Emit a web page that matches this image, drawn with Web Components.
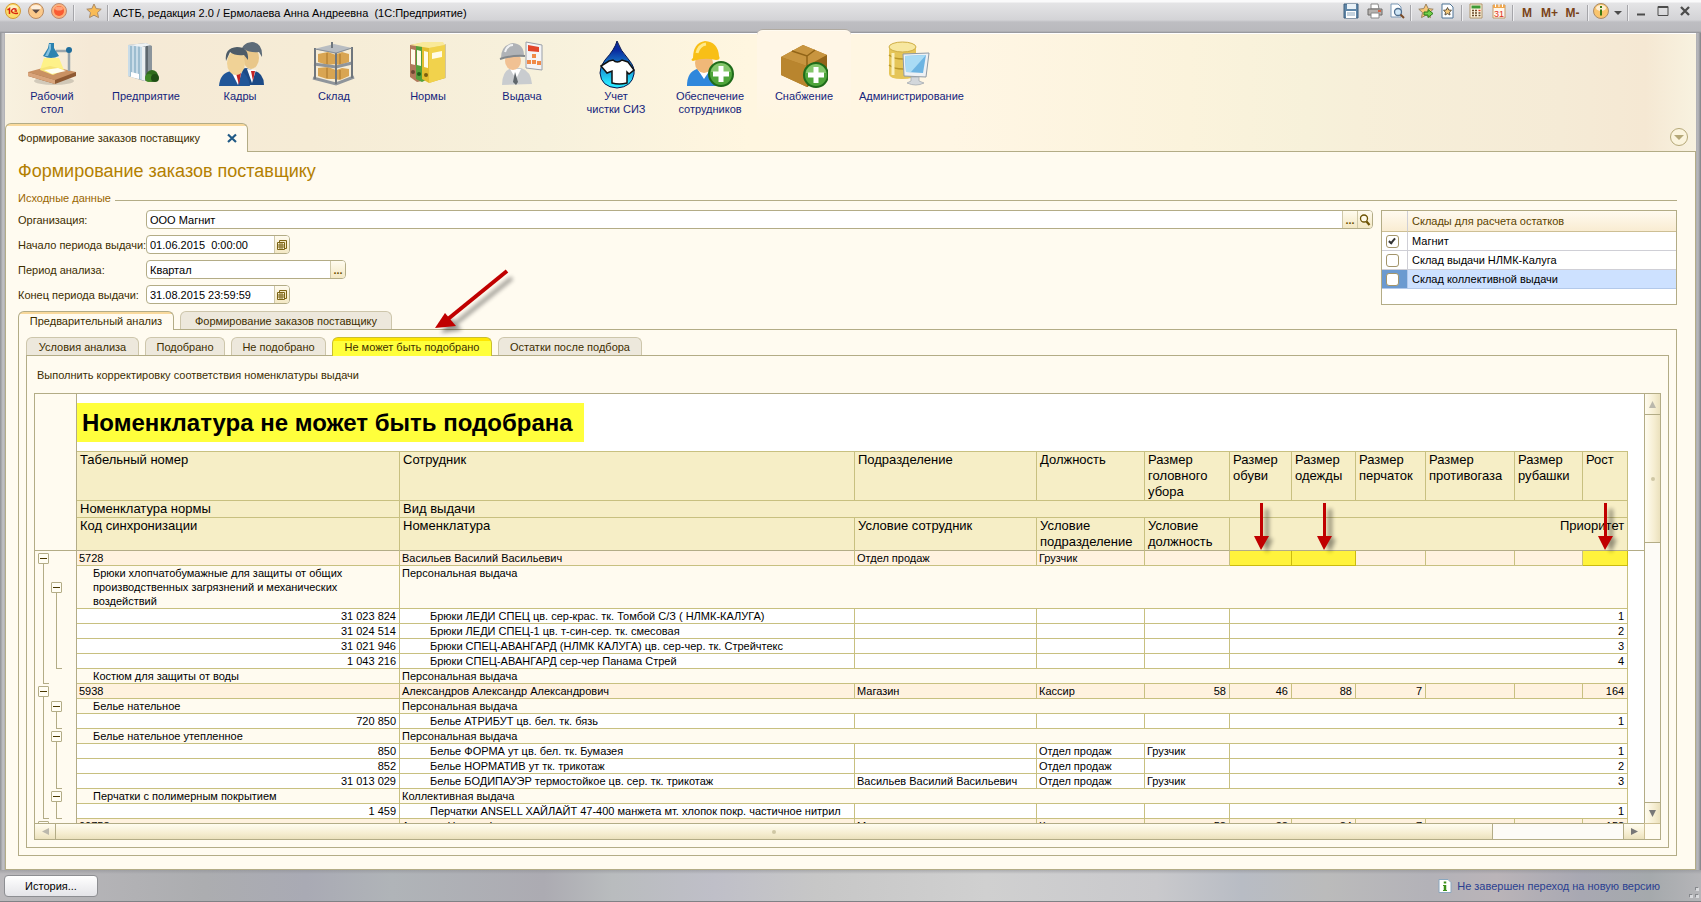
<!DOCTYPE html>
<html lang="ru">
<head>
<meta charset="utf-8">
<title>АСТБ, редакция 2.0</title>
<style>
html, body { margin: 0; height: 100%; }
body { font: 11px/14px "Liberation Sans", Arial, sans-serif; color: #3d2e00; }
</style>
</head>
<body>
<app-window></app-window>
<script>
const BASE = `
  *, *::before, *::after { box-sizing: border-box; }
  button, input { font: inherit; color: inherit; margin: 0; }
  button { background: none; border: 0; padding: 0; cursor: pointer; }
  svg { display: block; }
`;
function define(name, render) {
  customElements.define(name, class extends HTMLElement {
    connectedCallback() {
      if (this.shadowRoot) return;
      const t = document.createElement('template');
      t.innerHTML = render(this);
      this.attachShadow({ mode: 'open' }).append(t.content.cloneNode(true));
    }
  });
}

/* ---------- icons ---------- */
const star = 'M8 1l2.2 4.6 5 .6-3.700 3.400 1 5L8 12.200 3.500 14.600l1-5L.8 6.200l5-.6z';
const plus = (x, y) => `<circle cx="${x}" cy="${y}" r="12" fill="#4fa53a" stroke="#1f6b1a" stroke-width="2"/><path d="M${x - 10} ${y - 2}a10 9 0 0 1 20 0z" fill="#a9dc8c" opacity=".6"/><path d="M${x - 8} ${y}h16M${x} ${y - 8}v16" stroke="#fff" stroke-width="5"/>`;
const ICONS = {
  lamp: [48, `<ellipse cx="26" cy="40" rx="20" ry="4" fill="#000" opacity=".15"/>
    <path d="M0 31v4l27 8 21-8v-4z" fill="#8f5a33"/><path d="M0 31l22-6 26 6-21 8z" fill="#c99163"/><path d="M0 31v4l27 8v-4z" fill="#d9a57c"/>
    <path d="M16 17h15l5 12-11 5-13-5z" fill="#fff27a" opacity=".85"/><path d="M16 29l14-2 8 3-14 3z" fill="#fffef0"/>
    <path d="M28 10h12M41 11v19" stroke="#9aa6ad" stroke-width="2.500" fill="none"/><circle cx="41" cy="9" r="3" fill="#1f6d9c"/>
    <path d="M21 2h5v5l5 8q-8 4-16 0l5-8z" fill="#2c83b0"/><path d="M21 3h2v5l-3 7h-3l4-8z" fill="#83c1df"/>`],
  building: [48, `<path d="M6 4l18-2 6 3v35l-8 0L6 35z" fill="#8b949b"/><path d="M6 4l14 1v34L6 35z" fill="#c9dce8"/><path d="M9 5v30M13 5v31M17 5v33" stroke="#8fb2c8" stroke-width="1.500"/><path d="M6 4l18-2 5 2-9 2z" fill="#eef2f4"/><path d="M20 6l3 0v34l-3-1z" fill="#eceff1"/><path d="M25 5v34" stroke="#5f686e" stroke-width="2"/><path d="M9 31l8 2v5l-8-2z" fill="#fff"/>
    <circle cx="30" cy="35" r="6" fill="#2f6b1c"/><circle cx="27" cy="37" r="4" fill="#3f8626"/><circle cx="33" cy="37" r="4" fill="#1f4f14"/>`],
  people: [48, `<path d="M20 44q0-16 10-17l6 2q12 2 12 15z" fill="#1c4a86"/><path d="M31 28l5 14 4-13z" fill="#fff"/><path d="M35 30l2 10 2-10z" fill="#c62323"/><ellipse cx="35" cy="17" rx="8" ry="11" fill="#e9c78a"/><path d="M25 15Q24 2 36 1q11 1 10 15l-3-5q-9 1-15-3z" fill="#5d6b78"/>
    <path d="M3 45q1-13 12-15h10q7 3 9 15z" fill="#215698"/><path d="M15 30l7 14 4-14z" fill="#fff"/><path d="M20 32l3 12 2-12z" fill="#c62323"/><ellipse cx="20" cy="22" rx="9" ry="12" fill="#f0d296"/><path d="M10 20Q8 7 21 6q12 0 11 13l-4-5q-9 1-14-3z" fill="#4e5c68"/>`],
  rack: [48, `<path d="M4 8l20-5 18 4-16 6z" fill="#b9bdc2"/><path d="M8 13l10-2 8 3v9l-9 1-9-3zM24 14l8-3 7 2v8l-9 3-6-1zM8 27l10-1 8 3v9l-9 0-9-3zM24 30l8-3 7 1v7l-9 4-6-1z" fill="#d9a552"/><path d="M17 12v11M30 13v10M17 27v10M30 29v9" stroke="#a87428" stroke-width="1"/><path d="M4 23l22 3 16-4M3 37l23 6 18-7" fill="none" stroke="#8f959b" stroke-width="3"/><path d="M5 7v31M26 12v31M42 6v31M22 1v6" stroke="#6f767d" stroke-width="2" fill="none"/><path d="M5 8l21 4 16-5" fill="none" stroke="#898f95"/>`],
  binders: [48, `<path d="M34 5l8-2v34l-16 4z" fill="#7d6214" opacity=".3"/><path d="M6 4l12-2v38l-5 1-7-5z" fill="#b0795a"/><path d="M12 4l12-2v36l-6 3-6-3z" fill="#54a03a"/><path d="M18 5l17-3 6 2v33l-16 5-7-4z" fill="#e3bd2e"/><path d="M25 7l16-3v33l-16 5z" fill="#f1d24c"/><path d="M6 4l13-3h20l2 3-16 3z" fill="#f9e99a"/><path d="M7 8l4 1v15l-4-1zM13 9l4 1v15l-4-1zM20 10l4 1v16l-4-1zM28 12l10-2v6l-10 2z" fill="#fffbe8"/><circle cx="9" cy="31" r="2" fill="#6d4631"/><circle cx="15" cy="33" r="2" fill="#225c18"/><circle cx="22" cy="34" r="2" fill="#7a6010"/>`],
  issue: [48, `<path d="M28 1l16 3v25l-16-2z" fill="#f4f4f6" stroke="#9aa0a8"/><path d="M30 4l11 2v5l-11-1z" fill="#e2462a"/><path d="M29 19h4v4h-4zM34 19h4v4h-4zM39 20h4v4h-4zM34 13h4v4h-4z" fill="#f08a48"/><path d="M4 44q0-14 9-17h10q10 3 11 16z" fill="#c9cccf"/><path d="M12 28l6 10 5-10z" fill="#fff"/><path d="M17 31l-2 10 3 3 2-3z" fill="#5f666b"/><ellipse cx="15" cy="20" rx="8" ry="9" fill="#f1c193"/><path d="M3 17Q3 4 15 2q11 1 11 13-12 1-23 2z" fill="#b0b3b7"/><path d="M7 11q2-7 8-7" stroke="#f1f2f3" stroke-width="2" fill="none"/><path d="M2 18q12-4 25-3" stroke="#83888c" stroke-width="2" fill="none"/>`],
  laundry: [48, `<defs><linearGradient id="g" x2="0" y2="1"><stop offset=".2" stop-color="#0a2ca0"/><stop offset=".9" stop-color="#28e6ff"/></linearGradient></defs><path d="M25 0Q28 9 37 19q6 7 5 14-2 13-17 14Q9 46 8 32q0-7 5-13Q23 8 25 0z" fill="url(#g)" stroke="#06164e"/><path d="M17 20l4-1q4 4 9 0l6 2 6 8-5 4-2-2v11q-8 2-15 0V30l-5 2-6-7z" fill="#fff" stroke="#111" stroke-width="1.500"/>`],
  worker: [48, `<path d="M1 45q0-14 10-17h15q8 3 8 17z" fill="#2f87dc"/><path d="M12 29l6 9 6-9z" fill="#fff"/><ellipse cx="18" cy="22" rx="9" ry="10" fill="#f0b878"/><path d="M7 17Q7 2 19 0q13 1 14 15 2 4-3 4-12-3-23 1-3-1 0-3z" fill="#f8bf17"/><path d="M11 12q2-8 9-9" stroke="#ffe98a" stroke-width="3" fill="none"/>${plus(35, 33)}`],
  box: [48, `<path d="M1 16l22-12 24 10v20L27 46 1 34z" fill="#b07c26"/><path d="M1 16l22-12 24 10-20 11z" fill="#c8953f"/><path d="M1 16l26 9v21L1 34z" fill="#b9852e"/><path d="M27 25l20-11v20L27 46z" fill="#93641a"/><path d="M12 10l15 5 8-6M27 15l0 10" fill="none" stroke="#916417" stroke-width="1.500"/>${plus(36, 34)}`],
  admin: [48, `<path d="M2 6v27q0 5 13 5t14-5V6z" fill="#e5c558"/><path d="M2 14q5 4 14 4t13-4M2 24q5 4 14 4t13-4" fill="none" stroke="#b89528" stroke-width="1.500"/><ellipse cx="15.500" cy="6" rx="13.500" ry="5" fill="#f7e7a0" stroke="#cfae46"/><path d="M6 12v22" stroke="#fbf0bd" stroke-width="3"/><path d="M16 13l26-1-3 24-22-1z" fill="#eef1f4" stroke="#8f9aa5"/><path d="M18 15l21-1-3 18-17-1z" fill="#6db4e2"/><path d="M18 15l21-1-15 17-5 0z" fill="#a9dbf5"/><path d="M24 36h8v4l5 2q-8 4-17 0l4-2z" fill="#d3d7db" stroke="#a5abb1" stroke-width=".8"/>`],
  onec: [16, `<circle cx="8" cy="8" r="7.500" fill="#fbdc6a" stroke="#d59b35"/><ellipse cx="8" cy="5" rx="5" ry="3" fill="#fff" opacity=".6"/><path d="M2.500 7L4.500 5.500V11M11.500 6.500q-4-2-5 1.500Q7 11 13 10.300M9.500 8H12" stroke="#d8230f" stroke-width="1.500" fill="none"/>`],
  menu: [16, `<circle cx="8" cy="8" r="7.500" fill="#fbc98a" stroke="#b98a62"/><ellipse cx="8" cy="4.500" rx="5" ry="2.500" fill="#fff" opacity=".7"/><path d="M4 6.500h8L8 10.500z" fill="#5a4a44"/>`],
  red: [16, `<circle cx="8" cy="8" r="7.500" fill="#fdb07a" stroke="#b98a72"/><circle cx="8" cy="8" r="5" fill="#f95b33"/><ellipse cx="8" cy="5.500" rx="4" ry="2" fill="#ffa27a"/>`],
  star: [16, `<path d="${star}" fill="#f9bb55" stroke="#a88b6a"/>`],
  save: [16, `<path d="M1 1h14v14H1z" fill="#5f86a8" stroke="#40617f"/><path d="M4 1h9v5H4z" fill="#e9f1f7"/><path d="M3 8h10v7H3z" fill="#fff"/><path d="M4 10h8M4 12h8" stroke="#8ba6bd"/>`],
  print: [16, `<path d="M4 1h7l1 5H4z" fill="#fff" stroke="#888"/><path d="M1 6h14v6H1z" fill="#b5b1ae" stroke="#6d6a68"/><path d="M4 10h8v5H4z" fill="#fff" stroke="#888"/><path d="M11 8h3" stroke="#e04a20" stroke-width="1.500"/>`],
  preview: [16, `<path d="M2 1h7l3 3v10H2z" fill="#fdfeff" stroke="#7b98b5"/><circle cx="9" cy="9" r="3.500" fill="#cfe6f6" stroke="#4f6f8f" stroke-width="1.300"/><path d="M11.500 11.500l3.500 3.500" stroke="#7a4a26" stroke-width="2"/>`],
  starAdd: [16, `<path d="${star}" fill="#f9c777" stroke="#9b8360"/><path d="M6 9h4V6.500l5 4-5 4V12H6z" fill="#72d04a" stroke="#2a7d18"/>`],
  docStar: [16, `<path d="M2 1h8l3 3v11H2z" fill="#fdfeff" stroke="#4f7596"/><path d="M7.500 4.500l1.200 2.500 2.800.3-2 1.900.5 2.800-2.500-1.400L5 12l.5-2.800-2-1.900 2.800-.3z" fill="#f6c877" stroke="#5e5340"/>`],
  calc: [16, `<path d="M2 1h12v14H2z" fill="#fdf3dd" stroke="#b09468"/><path d="M3.500 2.500h9v3h-9z" fill="#3f9a34"/><path d="M4 7.500h2M7 7.500h2M4 10h2M7 10h2M4 12.500h2M7 12.500h2M10.500 10h2M10.500 12.500h2" stroke="#6a4a28" stroke-width="1.400"/><path d="M10.500 7.500h2" stroke="#e03c20" stroke-width="1.400"/>`],
  calendar: [16, `<path d="M2 2h12v13H2z" fill="#fff7ec" stroke="#c39a6a"/><path d="M2 2h12v3H2z" fill="#f0a850"/><path d="M4.500 1v3M8 1v3M11.500 1v3" stroke="#fff"/><text x="8" y="13.500" font-family="Liberation Sans" font-size="9" text-anchor="middle" fill="#e0301c">31</text>`],
  info: [16, `<circle cx="8" cy="8" r="7.500" fill="#fac56d" stroke="#a98b68"/><ellipse cx="8" cy="5" rx="5" ry="3" fill="#fff" opacity=".7"/><path d="M8 3v2M8 6.500v6" stroke="#3a7a12" stroke-width="2"/>`],
  caret: [10, `<path d="M1 4h8L5 8z" fill="#4c4c4c"/>`],
  min: [12, `<path d="M2 9.500h8" stroke="#4c4c4c" stroke-width="2"/>`],
  max: [12, `<path d="M1 1.500h10v9H1z" fill="none" stroke="#4c4c4c"/><path d="M1 2h10" stroke="#4c4c4c" stroke-width="2"/>`],
  close: [12, `<path d="M2 2l8 8M10 2l-8 8" stroke="#4c4c4c" stroke-width="2.300"/>`],
  closeTab: [12, `<path d="M2 2.500l8 7.500M10 2.500L2 10" stroke="#215a86" stroke-width="2.200"/>`],
  picker: [12, `<path d="M3.500 1.500h7v8h-7z" fill="#f3e8c4" stroke="#7d6414"/><path d="M1.500 3.500h7v7h-7z" fill="#fdf6dc" stroke="#7d6414"/><path d="M1 6h8M1 8h8M4 3v8M6 3v8" stroke="#7d6414"/>`],
  search: [12, `<circle cx="5" cy="4.500" r="3.500" fill="#fffbea" stroke="#6b5100" stroke-width="1.300"/><path d="M7.500 7.500l3 3.500" stroke="#6b5100" stroke-width="2.200"/>`],
  notice: [14, `<path d="M1 .5h9l3 3v10H1z" fill="#fff" stroke="#8aa7bf"/><path d="M7 2.500v2M7 6v5" stroke="#3c8f1b" stroke-width="2.500"/><path d="M5 6.500h2M5 11.500h4" stroke="#3c8f1b"/>`],
  grip: [14, `<path d="M10 2h3v3h-3zM4 9h3v3H4zM10 9h3v3h-3z" fill="#86888c"/><path d="M11 3h3v3h-3zM5 10h3v3H5zM11 10h3v3h-3z" fill="#d8d9dc"/>`]
};
define('ui-icon', el => {
  const [size, body] = ICONS[el.getAttribute('name')];
  return `<style>${BASE}:host{display:inline-block;flex:none}</style>
    <svg width="${size}" height="${size}" viewBox="0 0 ${size} ${size}" aria-hidden="true">${body}</svg>`;
});

/* ---------- title bar ---------- */
define('title-bar', () => {
  const b = (name, label) => `<button aria-label="${label}"><ui-icon name="${name}"></ui-icon></button>`;
  const m = t => `<button class="m">${t}</button>`;
  return `<style>${BASE}
    :host { display: flex; height: 33px; padding: 3px 5px 9px 5px; color: #000; justify-content: space-between;
      background: linear-gradient(#fafafb 0 2px, #e4e4e6 3px, #d3d3d6 20px, #bebec2 22px, #b9b9bd 31px, #8f9095 33px); }
    .side { display: grid; align-items: center; height: 19px; }
    .left { grid-template-columns: 16px 30px 16px 13px 27px 2px auto; }
    .right { grid-template-columns: 24px 24px 20px 8px 22px 22px 6px 22px 23px 6px 22px 23px 23px 7px 20px 14px 5px 22px 22px 22px; }
    .side > * { justify-self: center; }
    i { width: 2px; height: 16px; border-left: 1px solid #a5a5a9; border-right: 1px solid #efeff1; }
    h1 { margin: 0 0 0 4px; font: inherit; white-space: pre; }
    .m { font-weight: bold; font-size: 12px; color: #7a4318; }
  </style>
  <div class="side left">${b('onec', 'Главное меню')}${b('menu', 'Меню')}${b('red', 'Стоп')}<i></i>${b('star', 'Избранное')}<i></i>
    <h1>АСТБ, редакция 2.0 / Ермолаева Анна Андреевна  (1С:Предприятие)</h1></div>
  <div class="side right">${b('save', 'Сохранить')}${b('print', 'Печать')}${b('preview', 'Просмотр')}<i></i>${b('starAdd', 'Добавить в избранное')}${b('docStar', 'Избранное')}<i></i>${b('calc', 'Калькулятор')}${b('calendar', 'Календарь')}<i></i>${m('M')}${m('M+')}${m('M-')}<i></i>${b('info', 'Справка')}${b('caret', 'Ещё')}<i></i>${b('min', 'Свернуть')}${b('max', 'Развернуть')}${b('close', 'Закрыть')}</div>`;
});

/* ---------- sections ---------- */
define('section-item', el => `<style>${BASE}
  :host { display: block; min-width: 94px; }
  a { display: flex; flex-direction: column; align-items: center; height: 89px; padding: 7px 8px 0; color: #14247c; text-decoration: none; text-align: center; line-height: 13px; }
  ui-icon { height: 48px; margin-bottom: 1px; }
  :host([active]) a { height: 94px; margin-top: -5px; padding-top: 11px; border-radius: 6px 6px 0 0;
    background: linear-gradient(#fff6e6 60%, #fff6e600); border-top: 1px solid #b0aaa0; box-shadow: inset 0 1px #fffaf0; }
  </style><a href="#"><ui-icon name="${el.getAttribute('icon')}"></ui-icon><slot></slot></a>`);
define('section-bar', () => `<style>${BASE}
  :host { display: flex; height: 90px; border-top: 1px solid #fff; }</style><slot></slot>`);

/* ---------- tabs ---------- */
define('tab-button', el => `<style>${BASE}
  :host { display: block; position: relative; }
  button { display: flex; align-items: center; justify-content: center; height: 18px; min-width: inherit; padding: 0 10px; border: 1px solid #cdc6ab; border-bottom: 0;
    border-radius: 6px 6px 0 0; background: #ede8dc; white-space: nowrap; }
  :host([active]) button { height: 19px; border-color: #b3ac86; background: linear-gradient(#f9d99c 0 2px, #fffbf0 2px); }
  :host([marked]) button { background: linear-gradient(#ffe600 0 3px, #ffff3c 3px); border-color: #c9be2e; }
  ::slotted(pointer-arrow) { position: absolute; z-index: 2; left: 98px; bottom: 15px; }
  </style><button role="tab" aria-selected="${el.hasAttribute('active')}"><slot></slot></button><slot name="over"></slot>`);
define('tab-row', () => `<style>${BASE}
  :host { display: flex; gap: 6px; height: 18px; position: relative; z-index: 1; }</style><slot></slot>`);

/* ---------- annotation arrows ---------- */
define('pointer-arrow', el => {
  const css = '<style>:host{display:block;pointer-events:none}svg{display:block}.s{filter:blur(2px);opacity:.4}</style>';
  return css + (el.hasAttribute('long')
    ? `<svg width="90" height="80" viewBox="0 0 90 80" aria-hidden="true"><g class="s"><path d="M82 18L26 63" stroke="#000" stroke-width="4"/><path d="M11 73l10-15 11 12z"/></g><path d="M77 11L18 59" stroke="#c00000" stroke-width="4"/><path d="M5 68l10-15 11 13z" fill="#c00000"/></svg>`
    : `<svg width="32" height="54" viewBox="0 0 32 54" aria-hidden="true"><path class="s" d="M19 7h4v30h4l-6 14-6-14h4z"/><path d="M14 1h3v33h6l-8 14-7-14h6z" fill="#c00000"/></svg>`);
});

/* ---------- form ---------- */
define('form-field', el => {
  const a = n => el.getAttribute(n);
  const btn = { pick: '<button aria-label="Выбрать"><ui-icon name="picker"></ui-icon></button>', more: '<button aria-label="Выбрать">...</button>', find: '<button aria-label="Открыть"><ui-icon name="search"></ui-icon></button>' };
  return `<style>${BASE}
    :host { display: grid; grid-template-columns: 128px minmax(0, 1fr); align-items: start; height: 20px; }
    label { white-space: nowrap; line-height: 20px; }
    .box { display: flex; height: 19px; border: 1px solid #b3ac86; border-radius: 4px; background: #fff; overflow: hidden; }
    .box.date { width: 144px; } .box.mid { width: 200px; }
    input { flex: 1; min-width: 0; border: 0; padding: 0 3px; background: none; color: #000; outline: 0; }
    button { display: grid; place-items: center; width: 15px; border-left: 1px solid #cfc8a8; background: linear-gradient(#fffbee, #f3e8c4); font-weight: bold; color: #6b5100; }
  </style><label for="f">${a('label')}:</label>
  <div class="box ${a('kind') || ''}"><input id="f" value="${a('value')}">${a('buttons').split(' ').map(k => btn[k]).join('')}</div>`;
});
define('group-title', () => `<style>${BASE}
  :host { display: flex; align-items: center; gap: 4px; height: 16px; color: #996600; }
  :host::after { content: ""; flex: 1; height: 1px; margin-top: 4px; background: #b3ac86; }
  h3 { margin: 0; font: inherit; }</style><h3><slot></slot></h3>`);

define('warehouse-list', () => {
  const rows = [['Магнит', true], ['Склад выдачи НЛМК-Калуга', false], ['Склад коллективной выдачи', false]];
  return `<style>${BASE}
    :host { display: block; border: 1px solid #b3ac86; background: #fff; height: 95px; color: #000; }
    table { width: 100%; border-spacing: 0; table-layout: fixed; }
    th, td { padding: 0 0 0 4px; text-align: left; font-weight: normal; height: 19px; border-bottom: 1px solid #cfcfd6; }
    th { height: 21px; color: #5c4400; background: linear-gradient(#fffaf0, #f9ecd2); border-color: #cdbf94; }
    th:first-child, td:first-child { width: 26px; border-right: 1px solid #cfcfd6; }
    tr.sel td { background: #cde1ff; border-color: #b3c9ea; } tr.sel td:first-child { background: #6b9ad0; }
    input { appearance: none; display: block; position: relative; width: 13px; height: 13px; border: 1px solid #a3956a; border-radius: 3px; background: #fff; }
    input:checked::after { content: ""; position: absolute; left: 3px; top: 1px; width: 4px; height: 7px; border: solid #333; border-width: 0 2px 2px 0; transform: rotate(40deg); }
  </style><table><thead><tr><th></th><th>Склады для расчета остатков</th></tr></thead><tbody>
  ${rows.map(([t, c], i) => `<tr class="${i == 2 ? 'sel' : ''}"><td><input type="checkbox" id="w${i}" ${c ? 'checked' : ''}></td><td><label for="w${i}">${t}</label></td></tr>`).join('')}
  </tbody></table>`;
});

/* ---------- scroll bars ---------- */
define('scroll-bar', el => {
  const v = el.hasAttribute('vertical');
  return `<style>${BASE}
    :host { display: flex; flex-direction: ${v ? 'column' : 'row'}; background: #fdfbf6; border: 0 solid #b3ac86; border-${v ? 'left' : 'top'}-width: 1px; }
    button, .thumb { display: grid; place-items: center; background: linear-gradient(${v ? '90deg, ' : ''}#fffcf0, #f6eed2 60%, #ebe1bd); border: 0 solid #b3ac86; }
    button { flex: none; ${v ? 'height: 21px' : 'width: 21px'}; color: #777; }
    button:first-of-type { border-${v ? 'bottom' : 'right'}-width: 1px; color: #bbb8ac; }
    button:last-of-type { border-${v ? 'top' : 'left'}-width: 1px; }
    .thumb { flex: ${v ? 128 : 1438}; border-${v ? 'bottom' : 'right'}-width: 1px; }
    .thumb::after { content: ""; width: 4px; height: 4px; border-radius: 2px; background: #cfc7a4; }
    .rest { flex: ${v ? 260 : 130}; }
    svg { width: 9px; height: 9px; }
  </style><button aria-label="Назад"><svg viewBox="0 0 9 9"><path fill="currentColor" d="${v ? 'M1 8h7L4.500 1z' : 'M8 1v7L1 4.500z'}"/></svg></button><div class="thumb"></div><div class="rest"></div><button aria-label="Вперёд"><svg viewBox="0 0 9 9"><path fill="currentColor" d="${v ? 'M1 1h7L4.500 8z' : 'M1 1v7l7-3.500z'}"/></svg></button>`;
});

/* ---------- report sheet ---------- */
/* Outline lanes: b = collapse button, l = line, e = line end, n = empty */
const ROWS = [
  ['emp', 'bn', '5728', 'Васильев Василий Васильевич', 'Отдел продаж', 'Грузчик', '', '*', '*', '', '', '', '*'],
  ['norm', 'lb', 'Брюки хлопчатобумажные для защиты от общих производственных загрязнений и механических воздействий', 'Персональная выдача'],
  ['item', 'll', '31 023 824', 'Брюки ЛЕДИ СПЕЦ цв. сер-крас. тк. Томбой С/З ( НЛМК-КАЛУГА)', '', '', '', '1'],
  ['item', 'll', '31 024 514', 'Брюки ЛЕДИ СПЕЦ-1 цв. т-син-сер. тк. смесовая', '', '', '', '2'],
  ['item', 'll', '31 021 946', 'Брюки СПЕЦ-АВАНГАРД (НЛМК КАЛУГА) цв. сер-чер. тк. Стрейчтекс', '', '', '', '3'],
  ['item', 'le', '1 043 216', 'Брюки СПЕЦ-АВАНГАРД сер-чер Панама Стрей', '', '', '', '4'],
  ['norm', 'en', 'Костюм для защиты от воды', 'Персональная выдача'],
  ['emp', 'bn', '5938', 'Александров Александр Александрович', 'Магазин', 'Кассир', '58', '46', '88', '7', '', '', '164'],
  ['norm', 'lb', 'Белье нательное', 'Персональная выдача'],
  ['item', 'le', '720 850', 'Белье АТРИБУТ цв. бел. тк. бязь', '', '', '', '1'],
  ['norm', 'lb', 'Белье нательное утепленное', 'Персональная выдача'],
  ['item', 'll', '850', 'Белье ФОРМА ут цв. бел. тк. Бумазея', '', 'Отдел продаж', 'Грузчик', '1'],
  ['item', 'll', '852', 'Белье НОРМАТИВ ут тк. трикотаж', '', 'Отдел продаж', '', '2'],
  ['item', 'le', '31 013 029', 'Белье БОДИПАУЭР термостойкое цв. сер. тк. трикотаж', 'Васильев Василий Васильевич', 'Отдел продаж', 'Грузчик', '3'],
  ['norm', 'lb', 'Перчатки с полимерным покрытием', 'Коллективная выдача'],
  ['item', 'ee', '1 459', 'Перчатки ANSELL ХАЙЛАЙТ 47-400 манжета мт. хлопок покр. частичное нитрил', '', '', '', '1'],
  ['emp', 'bn', '00758', 'Антонов Никита Федорович', 'Магазин', 'Кассир', '58', '38', '84', '7', '', '', '158']
];
define('report-sheet', () => {
  const lane = k => k === 'b' ? '<span class="lane b"><button aria-label="Свернуть группу"></button></span>' : `<span class="lane ${k}"></span>`;
  const tree = k => `<td class="tree"><div>${[...k].map(lane).join('')}</div></td>`;
  const row = ([kind, lanes, ...c]) => {
    let cells;
    if (kind === 'emp') cells = c.map((t, i) => t === '*' ? '<td class="hot"><pointer-arrow></pointer-arrow></td>' : `<td class="${i > 3 ? 'num' : ''}">${t}</td>`).join('');
    else if (kind === 'norm') cells = `<td class="in1">${c[0]}</td><td colspan="10">${c[1]}</td>`;
    else cells = `<td class="num">${c[0]}</td><td class="in2">${c[1]}</td><td>${c[2]}</td><td>${c[3]}</td><td>${c[4]}</td><td class="num" colspan="6">${c[5]}</td>`;
    return `<tr class="${kind}">${tree(lanes)}${cells}<td class="fill"></td></tr>`;
  };
  const th = (...t) => t.map(x => `<th>${x}</th>`).join('');
  return `<style>${BASE}
    :host { display: grid; grid-template: minmax(0, 1fr) 16px / minmax(0, 1fr) 16px; border: 1px solid #b3ac86; background: #fff; color: #000; }
    .view { overflow: hidden; background: linear-gradient(90deg, #fffbf0 41px, #fff 41px); }
    .corner { background: #fffbf0; border-left: 1px solid #cdbf94; border-top: 1px solid #cdbf94; }
    table { width: 100%; border-spacing: 0; table-layout: fixed; }
    th, td { padding: 0 2px; border: 0 solid #c8c080; border-width: 0 1px 1px 0; vertical-align: top; text-align: left; line-height: 14px; }
    td { white-space: nowrap; }
    .tree { padding: 0; border-color: #b3ac86; border-bottom: 0; height: 1px; }
    .fill { border: 0; padding: 0; }
    th { padding: 0 3px; font: 13px/16px "Liberation Sans", Arial, sans-serif; background: #f6eec6; }
    .r1 { height: 49px; } .r2 { height: 17px; } .r3 { height: 33px; }
    .r3 > * { border-bottom: 1px solid #b3ac86; }
    .head td.title { height: 58px; padding: 9px 0 0; border-right: 0; }
    h2 { display: inline-block; margin: 0; padding: 0 6px 0 5px; width: 507px; background: #ffff3c; font: bold 24px/39px "Liberation Sans", Arial, sans-serif; }
    .emp > td { background: #fff2df; } .norm > td { background: #fffbf0; } .item > td { background: #fff; }
    tr > td.tree { background: #fffbf0; }
    tr > td.fill { background: #fff; }
    .num { text-align: right; padding-right: 3px; } .in1 { padding-left: 16px; padding-right: 48px; white-space: normal; } .in2 { padding-left: 30px; }
    .emp > td.hot { position: relative; background: #fff33c; border-color: #cbbb10; padding: 0; }
    .hot pointer-arrow { position: absolute; bottom: 9px; left: calc(50% - 15px); z-index: 1; }
    .tree > div { display: flex; height: 100%; padding-left: 3px; gap: 2px; }
    .lane { display: flex; flex-direction: column; align-items: center; width: 11px; }
    .lane.l::before, .lane.e::before { content: ""; width: 6px; margin-left: 5px; height: 100%; border-left: 1px solid #b3ac86; }
    .lane.e::before { border-bottom: 1px solid #b3ac86; }
    .lane.b::before, .lane.b::after { content: ""; flex: 1; }
    .lane.b::after { border-left: 1px solid #b3ac86; }
    .lane button { width: 11px; height: 11px; flex: none; border: 1px solid #b3ac86; border-radius: 1px; background: linear-gradient(#4a3800, #4a3800) center / 7px 1px no-repeat #fffdf3; }
  </style>
  <div class="view"><table>
    <colgroup>${[42, 323, 455, 182, 108, 85, 62, 64, 70, 89, 68, 45].map(w => `<col style="width:${w}px">`).join('')}<col></colgroup>
    <thead class="head">
      <tr><td class="tree"></td><td class="title" colspan="11"><h2>Номенклатура не может быть подобрана</h2></td><td class="fill"></td></tr>
      <tr class="r1"><td class="tree"></td>${th('Табельный номер', 'Сотрудник', 'Подразделение', 'Должность', 'Размер головного убора', 'Размер обуви', 'Размер одежды', 'Размер перчаток', 'Размер противогаза', 'Размер рубашки', 'Рост')}<td class="fill"></td></tr>
      <tr class="r2"><td class="tree"></td><th>Номенклатура нормы</th><th colspan="10">Вид выдачи</th><td class="fill"></td></tr>
      <tr class="r3"><td class="tree"></td>${th('Код синхронизации', 'Номенклатура', 'Условие сотрудник', 'Условие подразделение', 'Условие должность')}<th colspan="6" class="num">Приоритет</th><td class="fill"></td></tr>
    </thead>
    <tbody>${ROWS.map(row).join('')}</tbody>
  </table></div>
  <scroll-bar vertical></scroll-bar><scroll-bar></scroll-bar><div class="corner"></div>`;
});

/* ---------- status bar ---------- */
define('status-bar', () => `<style>${BASE}
  :host { display: flex; align-items: center; justify-content: space-between; height: 32px; padding: 0 2px 0 4px; border-bottom: 1px solid #808286;
    background: linear-gradient(#8a8b9080, #0000 4px), linear-gradient(90deg, #bbb9bc, #acadb0 12%, #a9aab4 18%, #b0b4b8 23%, #acabb2 32%, #b9bcbe 36%, #bfbfc8 42%, #c7c7c7 48%, #d0d0d0 58%, #c9c9cc 68%, #b8bcc4 73%, #bbb 78%, #b3b2b8 84%, #bab4b8 88%, #a8a8b2 93%, #a5a9ac 97%, #b5b5b8); }
  button.h { height: 22px; width: 94px; border: 1px solid #8d8e92; border-radius: 4px; background: linear-gradient(#fff, #e4e4e8); color: #000; }
  .r { display: flex; align-items: center; }
  a { display: flex; align-items: center; gap: 5px; color: #2a4090; text-decoration: none; margin-right: 25px; }
  .r > ui-icon { margin-top: 12px; }
  </style><button class="h">История...</button><div class="r"><a href="#"><ui-icon name="notice"></ui-icon>Не завершен переход на новую версию</a><ui-icon name="grip"></ui-icon></div>`);

/* ---------- window ---------- */
define('app-window', () => `<style>${BASE}
  :host { display: flex; flex-direction: column; height: 100vh; min-height: 600px; background: linear-gradient(90deg, #8e9094, #c3c3c6 3px, #aeaeb2 5px, #aeaeb2 calc(100% - 5px), #b8b8bc calc(100% - 3px), #7f8185); }
  .frame { flex: 1; min-height: 0; display: flex; flex-direction: column; margin: 0 5px;
    background: linear-gradient(90deg, #f8f1df, #f5e9d6 5%, #f6ecd6 18%, #f7f1dc 32%, #fff6e0 44%, #fff6e4 56%, #fbf3dc 70%, #f7f1da 77%, #f7efd9 80%, #f5ebd6 92%, #f5e8d3 97%, #f8f2e0); }
  .docs { display: flex; justify-content: space-between; height: 28px; padding: 0 8px 0 0; }
  .doc { display: flex; align-items: center; justify-content: space-between; width: 243px; height: 29px; padding: 0 9px 0 12px; border: 1px solid #b3ac86; border-bottom: 0; border-radius: 6px 6px 0 0; background: linear-gradient(#f9d99c 0 2px, #fffbf0 2px); position: relative; z-index: 1; }
  .doc button, .drop { display: grid; place-items: center; }
  .drop { width: 18px; height: 18px; margin-top: 5px; border: 1px solid #b5a878; border-radius: 50%; background: #fbf4dd; }
  .drop::after { content: ""; border: 5px solid transparent; border-top-color: #b5a878; border-bottom: 0; }
  main { flex: 1; min-height: 0; display: flex; flex-direction: column; padding: 8px 18px 13px 12px; border: 1px solid #b3ac86; background: #fffbf0; }
  h2 { margin: 0; font: 18px/22px "Liberation Sans", Arial, sans-serif; color: #b38000; }
  group-title { margin-top: 8px; }
  .form { display: grid; grid-template-columns: minmax(0, 1fr) 296px; gap: 8px; margin-top: 4px; }
  .fields { display: flex; flex-direction: column; gap: 5px; }
  .main-tabs { margin-top: 6px; }
  .panel { flex: 1; min-height: 0; display: flex; flex-direction: column; border: 1px solid #b3ac86; padding: 7px; }
  .inner { padding-top: 12px; }
  p { margin: 0 0 10px 3px; line-height: 15px; }
  report-sheet { flex: 1; min-height: 0; }
</style>
<title-bar></title-bar>
<div class="frame">
  <section-bar>
    <section-item icon="lamp">Рабочий<br>стол</section-item><section-item icon="building">Предприятие</section-item><section-item icon="people">Кадры</section-item><section-item icon="rack">Склад</section-item><section-item icon="binders">Нормы</section-item><section-item icon="issue">Выдача</section-item><section-item icon="laundry">Учет<br>чистки СИЗ</section-item><section-item icon="worker">Обеспечение<br>сотрудников</section-item><section-item icon="box" active>Снабжение</section-item><section-item icon="admin">Администрирование</section-item>
  </section-bar>
  <div class="docs"><div class="doc"><span>Формирование заказов поставщику</span><button aria-label="Закрыть вкладку"><ui-icon name="closeTab"></ui-icon></button></div><button class="drop" aria-label="Список вкладок"></button></div>
  <main>
    <h2>Формирование заказов поставщику</h2>
    <group-title>Исходные данные</group-title>
    <div class="form">
      <div class="fields">
        <form-field label="Организация" value="ООО Магнит" buttons="more find"></form-field>
        <form-field label="Начало периода выдачи" value="01.06.2015  0:00:00" kind="date" buttons="pick"></form-field>
        <form-field label="Период анализа" value="Квартал" kind="mid" buttons="more"></form-field>
        <form-field label="Конец периода выдачи" value="31.08.2015 23:59:59" kind="date" buttons="pick"></form-field>
      </div>
      <warehouse-list></warehouse-list>
    </div>
    <tab-row class="main-tabs" role="tablist"><tab-button active style="min-width:156px">Предварительный анализ</tab-button><tab-button style="min-width:212px">Формирование заказов поставщику</tab-button></tab-row>
    <div class="panel">
      <tab-row role="tablist"><tab-button style="min-width:113px">Условия анализа</tab-button><tab-button style="min-width:80px">Подобрано</tab-button><tab-button style="min-width:95px">Не подобрано</tab-button><tab-button active marked style="min-width:160px">Не может быть подобрано<pointer-arrow long slot="over"></pointer-arrow></tab-button><tab-button style="min-width:144px">Остатки после подбора</tab-button></tab-row>
      <div class="panel inner"><p>Выполнить корректировку соответствия номенклатуры выдачи</p><report-sheet></report-sheet></div>
    </div>
  </main>
</div>
<status-bar></status-bar>`);
</script>
</body>
</html>
